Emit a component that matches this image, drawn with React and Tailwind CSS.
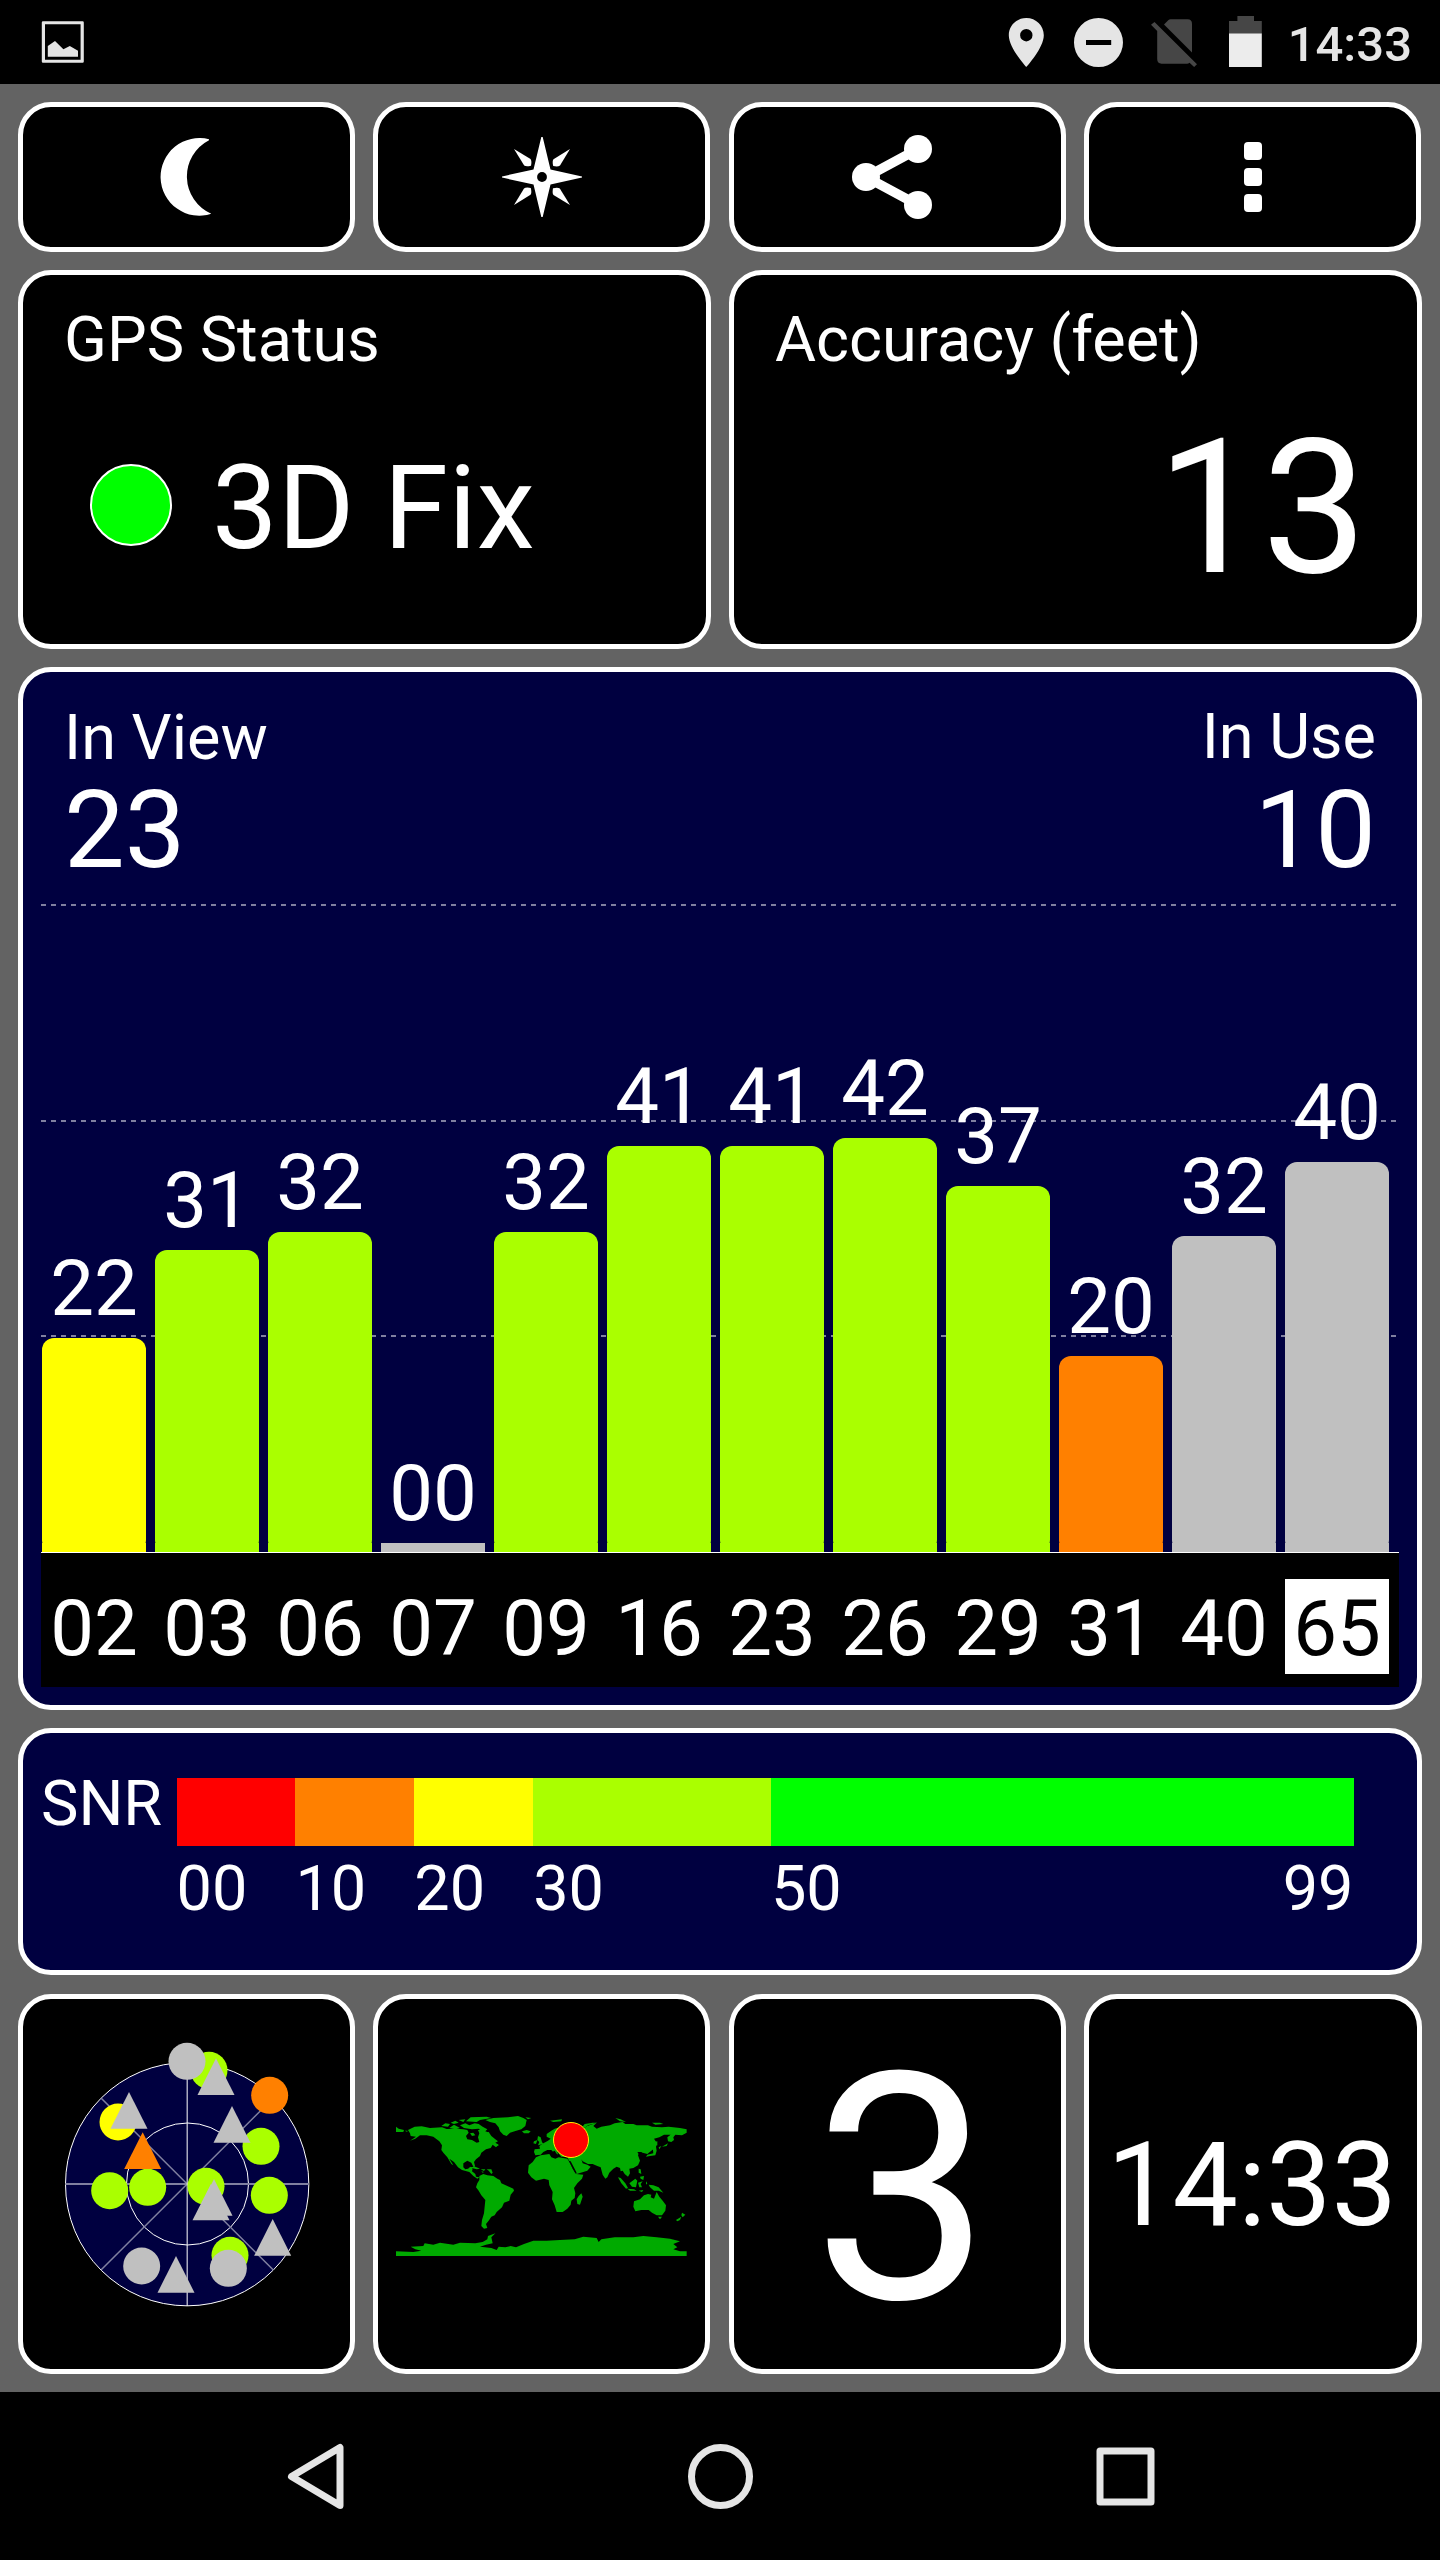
const SATELLITES = [
  { id: "02", snr: "22", height: 214, color: "bg-[#ffff00]" },
  { id: "03", snr: "31", height: 302, color: "bg-[#aaff00]" },
  { id: "06", snr: "32", height: 320, color: "bg-[#aaff00]" },
  { id: "07", snr: "00", height: 9, color: "bg-[#c0c0c0]" },
  { id: "09", snr: "32", height: 320, color: "bg-[#aaff00]" },
  { id: "16", snr: "41", height: 406, color: "bg-[#aaff00]" },
  { id: "23", snr: "41", height: 406, color: "bg-[#aaff00]" },
  { id: "26", snr: "42", height: 414, color: "bg-[#aaff00]" },
  { id: "29", snr: "37", height: 366, color: "bg-[#aaff00]" },
  { id: "31", snr: "20", height: 196, color: "bg-[#ff8000]" },
  { id: "40", snr: "32", height: 316, color: "bg-[#c0c0c0]" },
  { id: "65", snr: "40", height: 390, color: "bg-[#c0c0c0]", active: true },
];

const SNR_SCALE = [
  { label: "00", span: 10, color: "bg-[#ff0000]" },
  { label: "10", span: 10, color: "bg-[#ff8000]" },
  { label: "20", span: 10, color: "bg-[#ffff00]" },
  { label: "30", span: 20, color: "bg-[#aaff00]" },
  { label: "50", span: 49, color: "bg-[#00ff00]" },
];

const LIME = "#aaff00";
const GRAY = "#c0c0c0";
const ORANGE = "#ff8000";

// sky plot markers, in drawing order
const SKY = [
  { x: 292, y: 396, fill: "#ffff00" },
  { x: 565, y: 241, fill: LIME },
  { x: 721, y: 469, fill: LIME },
  { x: 267, y: 602, fill: LIME },
  { x: 381, y: 592, fill: LIME },
  { x: 556, y: 589, fill: LIME },
  { x: 746, y: 616, fill: LIME },
  { x: 628, y: 796, fill: LIME },
  { x: 747, y: 316, fill: ORANGE },
  { x: 499, y: 214, fill: GRAY },
  { x: 363, y: 828, fill: GRAY },
  { x: 623, y: 835, fill: GRAY },
  { x: 366, y: 482, fill: ORANGE, tri: true },
  { x: 325, y: 361, fill: GRAY, tri: true },
  { x: 586, y: 260, fill: GRAY, tri: true },
  { x: 634, y: 403, fill: GRAY, tri: true },
  { x: 580, y: 622, fill: GRAY, tri: true },
  { x: 571, y: 636, fill: GRAY, tri: true },
  { x: 756, y: 742, fill: GRAY, tri: true },
  { x: 466, y: 853, fill: GRAY, tri: true },
];

function Card({ className = "", children }) {
  return (
    <div className={`border-[5px] border-white rounded-[33px] overflow-hidden ${className}`}>
      {children}
    </div>
  );
}

function StatusBar() {
  return (
    <header className="h-[84px] bg-black text-[#e5e5e5] flex items-start justify-between pl-[41px] pr-[28px]">
      <svg width="44" height="84" viewBox="41 0 44 84" fill="#e5e5e5">
        <path fillRule="evenodd" d="M43 21.3h39.6a1.2 1.2 0 0 1 1.2 1.2v39a1.2 1.2 0 0 1-1.2 1.2H43a1.2 1.2 0 0 1-1.2-1.2v-39a1.2 1.2 0 0 1 1.2-1.2zM45 24.2v35.6h35.6V24.2z" />
        <path d="M47.8 46 55 41l8.4 8.3 6.4-3.3 8.2 4.7v6H47.8z" />
      </svg>
      <div className="flex items-start">
        <svg width="262" height="84" viewBox="1005 0 262 84" fill="#e5e5e5">
          <path
            fillRule="evenodd"
            d="M1026.3 18c-9.7 0-17.5 7.7-17.5 17.2 0 12.8 17.5 31.8 17.5 31.8s17.5-19 17.5-31.8c0-9.5-7.8-17.2-17.5-17.2zm0 23.4a6.2 6.2 0 1 1 0-12.4 6.2 6.2 0 0 1 0 12.4z"
          />
          <path
            fillRule="evenodd"
            d="M1098.5 18a24.5 24.5 0 1 0 0 49 24.5 24.5 0 0 0 0-49zM1086 40h25.2v5H1086z"
          />
          <g fill="#464646">
            <path d="M1164 24.5l4.5-4.5q.8-.7 2-.7h17q4.5 0 4.5 4.6v28.6z" />
            <path d="M1154.5 22 1197 64.2l-2.9 2.8-4.6-4.2q-1 .9-2.5.9h-25.4q-4.4 0-4.4-4.6V31l-6.2-6.3z" />
            <path d="M1237.4 16h16.6v5h7.8v13h-32.8V21h8.4z" />
          </g>
          <path fill="#ececec" d="M1229 33.5h32.8V67H1229z" />
        </svg>
        <span className="ml-[21px] mt-[20px] text-[49px] leading-none font-medium">14:33</span>
      </div>
    </header>
  );
}

function MoonIcon() {
  return (
    <svg width="60" height="84" viewBox="156 135 60 84" fill="#fff">
      <path d="M208 140.2A40.8 40.8 0 0 0 210.3 213.8 38.8 38.8 0 1 1 208 139.3z" />
    </svg>
  );
}

function CompassIcon() {
  return (
    <svg width="84" height="84" viewBox="-42 -42 84 84" fill="#fff">
      <path d="M-.7-40h1.4L8.5-7.5 40-.6V.6L8.5 7.5.7 40H-.7L-8.5 7.5-40 .6V-.6L-8.5-7.5z" />
      <circle r="4.9" fill="#000" />
      {[0, 90, 180, 270].map((angle) => (
        <path key={angle} transform={`rotate(${angle})`} d="M-28-28-11.5-18Q-10-16-11-11.2-16-10-17.8-11.5z" />
      ))}
    </svg>
  );
}

function ShareIcon() {
  return (
    <svg width="84" height="88" viewBox="850 133 84 88" fill="#fff">
      <path d="M918 149 866 177l52 28" fill="none" stroke="#fff" strokeWidth="9.5" />
      <circle cx="866" cy="177" r="14" />
      <circle cx="918" cy="149" r="14" />
      <circle cx="918" cy="205" r="14" />
    </svg>
  );
}

function MoreIcon() {
  return (
    <div className="flex flex-col gap-2">
      <span className="size-[18px] rounded-[4px] bg-white" />
      <span className="size-[18px] rounded-[4px] bg-white" />
      <span className="size-[18px] rounded-[4px] bg-white" />
    </div>
  );
}

function Toolbar() {
  return (
    <div className="grid grid-cols-[355px_356px_355px_337px] h-[150px]">
      <Card className="w-[337px] bg-black flex items-center justify-center">
        <MoonIcon />
      </Card>
      <Card className="w-[337px] bg-black flex items-center justify-center">
        <CompassIcon />
      </Card>
      <Card className="w-[337px] bg-black flex items-center justify-center pr-[11px]">
        <ShareIcon />
      </Card>
      <Card className="w-[337px] bg-black flex items-center justify-center">
        <MoreIcon />
      </Card>
    </div>
  );
}

function SatelliteChart() {
  return (
    <Card className="bg-[#000040] h-[1043px] px-[18px]">
      <div className="flex justify-between px-[23px] pt-[33px] h-[232px]">
        <div className="leading-none">
          <div className="text-[63px] pt-px">In View</div>
          <div className="text-[108px] mt-[7px]">23</div>
        </div>
        <div className="leading-none text-right">
          <div className="text-[63px]">In Use</div>
          <div className="text-[108px] mt-2">10</div>
        </div>
      </div>

      <div className="relative w-[1358px] h-[648px]">
        <svg className="absolute inset-0" width="1358" height="648" stroke="#8080a0" strokeWidth="2" strokeDasharray="5 5">
          <path d="M0 1H1356M0 217H1356M0 432H1356" />
        </svg>
        <div className="relative h-full flex items-end gap-[9px] pl-px">
          {SATELLITES.map((sat) => (
            <div key={sat.id} className="w-[104px] flex flex-col items-center">
              <span className="text-[78px] leading-none mb-[10px]">{sat.snr}</span>
              <div
                className={`w-full flex items-end ${sat.height > 12 ? "rounded-[12px]" : ""} ${sat.color}`}
                style={{ height: sat.height }}
              >
                <div className={`w-full h-[9px] ${sat.color}`} />
              </div>
            </div>
          ))}
        </div>
      </div>

      <div className="w-[1358px] h-[135px] bg-black border-t border-white flex gap-[9px] pl-px pt-[26px]">
        {SATELLITES.map((sat) => (
          <div
            key={sat.id}
            className={`w-[104px] h-[95px] pt-[11px] text-center text-[78px] leading-none ${sat.active ? "bg-white text-black" : ""}`}
          >
            {sat.id}
          </div>
        ))}
      </div>
    </Card>
  );
}

function SnrLegend() {
  return (
    <Card className="bg-[#000040] h-[247px] flex items-start text-[63px] leading-none pt-[45px] pl-[18px]">
      <div className="w-[135.5px] -mt-[6px]">SNR</div>
      <div className="w-[1177px]">
        <div className="flex h-[68px]">
          {SNR_SCALE.map((s) => (
            <div key={s.label} className={s.color} style={{ flexGrow: s.span, flexBasis: 0 }} />
          ))}
        </div>
        <div className="flex mt-[11px]">
          {SNR_SCALE.map((s) => (
            <div key={s.label} className="flex justify-between" style={{ flexGrow: s.span, flexBasis: 0 }}>
              <span>{s.label}</span>
              {s.label === "50" && <span>99</span>}
            </div>
          ))}
        </div>
      </div>
    </Card>
  );
}

function SkyPlot() {
  return (
    <svg width="280" height="300" viewBox="79 132 840 900">
      <circle cx="499.5" cy="582.5" r="365" fill="#000040" stroke="#fff" strokeWidth="3" />
      <circle cx="500.5" cy="582" r="183" fill="none" stroke="#fff" strokeWidth="3" />
      <path d="M134 582H865" stroke="#8080a0" strokeWidth="6" />
      <path d="M241 324 758 840M758 324 241 840" stroke="#8080a0" strokeWidth="4.5" />
      <path d="M499.5 217V948" stroke="#fff" strokeWidth="3" />
      {SKY.map((m, i) =>
        m.tri ? (
          <path key={i} d={`M${m.x} ${m.y - 55}l55.5 110h-111z`} fill={m.fill} />
        ) : (
          <circle key={i} cx={m.x} cy={m.y} r="55.5" fill={m.fill} />
        )
      )}
    </svg>
  );
}

function WorldMap() {
  return (
    <svg width="320" height="170" viewBox="0 0 960 510">
      <g fill="#00aa00">
        {/* north america */}
        <path d="M84 90 104 80 125 79 150 84 186 82 200 87 230 86 250 88 262 90 266 98 258 108 262 118 276 120 290 128 298 126 294 112 298 100 294 90 308 90 318 100 326 96 334 108 346 118 354 124 346 128 356 134 348 142 338 134 332 144 318 148 304 158 300 168 288 178 282 186 285 198 282 204 274 188 262 182 250 190 250 202 256 208 264 206 272 200 278 206 276 214 286 222 288 230 298 232 292 236 280 228 268 216 246 210 234 202 222 186 208 176 220 196 214 192 202 172 190 158 184 150 186 136 178 124 160 110 140 106 120 106 106 116 90 122 108 110 92 108 90 100z" />
        {/* arctic islands and greenland */}
        <path d="M184 78 196 70 210 72 204 80zM208 84 222 74 240 84 226 88zM212 68 226 62 236 68 222 72zM240 76 256 70 268 76 284 70 296 72 308 80 322 88 316 94 328 98 318 102 304 94 296 86 276 88 252 84zM236 60 256 58 250 66zM258 64 272 52 320 50 334 54 300 60 290 66zM270 100 280 98 286 106 276 108zM344 136 352 132 356 138z" />
        <path d="M316 60 340 54 384 52 414 48 430 54 440 60 436 78 424 88 404 94 390 98 380 108 370 104 360 94 356 82 346 70 330 66zM426 94 440 90 452 94 446 100 432 100zM436 52 454 54 444 58z" />
        {/* caribbean */}
        <path d="M266 202 286 200 300 206 290 208zM302 208 316 208 312 213zM320 208 334 208 338 218 334 222 326 212zM304 214 312 216 308 218z" />
        {/* south america */}
        <path d="M298 228 310 222 322 226 340 228 352 236 360 240 364 250 382 258 400 266 402 272 392 284 388 302 372 308 366 322 350 336 344 346 334 350 326 362 318 372 322 384 312 386 304 378 306 360 312 340 316 300 304 286 296 272 288 262 292 250 298 240z" />
        {/* africa */}
        <path d="M468 172 482 166 508 162 514 172 526 176 536 172 562 176 570 188 578 206 588 222 610 224 606 236 592 250 582 264 586 280 584 294 574 302 572 314 562 326 548 336 530 336 524 316 516 298 518 276 508 256 506 240 492 236 468 242 454 232 444 218 446 196 458 186zM604 280 608 290 600 314 592 312 590 298 596 288z" />
        {/* europe and asia */}
        <path d="M464 148 480 146 478 138 490 130 504 122 512 116 500 110 500 102 514 92 524 86 560 74 580 86 610 86 622 78 650 68 640 78 650 86 664 80 690 76 704 70 728 66 736 72 760 72 770 76 804 76 816 80 846 82 866 80 900 84 920 88 920 98 906 106 886 104 880 112 882 120 874 126 864 124 862 112 872 104 852 104 838 112 822 116 830 128 828 142 814 152 802 162 788 158 778 156 774 166 780 182 774 196 760 204 748 206 750 220 744 230 734 222 728 212 722 214 720 204 710 200 700 206 688 218 682 232 676 236 668 224 662 202 652 198 638 192 624 192 608 184 604 178 608 190 622 194 632 200 622 212 590 222 580 206 568 184 562 172 544 170 534 158 528 148 534 162 528 166 514 150 502 150 490 156 482 164 466 166 462 156z" />
        <path d="M474 108 482 112 486 126 490 132 474 136 478 126 472 120zM462 124 472 120 468 132 460 130zM510 62 546 58 544 64 520 66zM606 82 614 72 638 68 652 68 624 76 614 84zM706 54 722 58 738 66 720 64zM816 68 840 68 850 72 826 74zM48 80 56 86 72 90 70 96 48 96zM74 92 82 92 82 96z" />
        {/* japan, kamchatka */}
        <path d="M818 142 828 140 830 152 826 166 810 168 798 170 802 164 820 160zM822 126 832 124 832 136 824 138zM836 142 844 138 838 148zM846 140 864 130 860 138z" />
        {/* indonesia, philippines, new guinea */}
        <path d="M714 232 722 234 736 250 744 264 738 266 724 250zM742 266 762 268 770 272 750 272zM748 250 766 236 772 242 768 262 756 260zM774 248 788 244 782 252 786 262 778 262zM776 206 782 208 784 222 776 218zM780 230 792 228 790 240 782 236zM806 254 820 256 836 262 850 278 836 272 822 272 810 262zM776 272 790 270 786 276zM798 244 802 250 798 254z" />
        {/* australia, new zealand */}
        <path d="M762 304 780 298 792 286 804 282 814 284 812 292 822 296 830 276 838 290 848 302 858 316 856 332 846 346 830 346 816 338 806 330 784 330 766 334 760 320zM834 350 846 350 840 358zM906 338 916 344 908 352 904 346zM888 360 904 350 900 360 892 364z" />
        {/* antarctica */}
        <path d="M48 454 100 456 124 452 106 448 92 440 130 438 134 430 160 434 180 428 220 434 240 428 286 430 308 426 322 418 324 408 346 400 334 412 338 430 318 434 300 440 334 444 350 450 356 440 376 442 392 438 408 442 432 432 460 422 500 422 540 420 584 418 610 410 650 414 656 426 664 418 704 412 760 412 790 408 830 412 870 416 900 424 880 432 892 442 880 448 900 454 920 454 920 468 48 468z" />
      </g>
      <g fill="#000">
        <path d="M566 182 572 184 590 218 586 220zM772 156 780 168 790 164 784 156zM516 156 524 152 532 164 536 172 522 166z" />
      </g>
      <circle cx="573" cy="120" r="52.5" fill="#f00" stroke="#ffee00" strokeWidth="3" />
    </svg>
  );
}

function NavBar() {
  return (
    <nav className="h-[168px] bg-black flex items-center gap-[333px] pl-[279px]">
      <svg width="72" height="72" fill="none" stroke="#e5e5e5" strokeWidth="7" strokeLinejoin="round">
        <path d="M61 7.5v58L12.5 36.5z" />
      </svg>
      <svg width="72" height="72" fill="none" stroke="#e5e5e5" strokeWidth="7">
        <circle cx="36.5" cy="36.5" r="29" />
      </svg>
      <svg width="72" height="72" fill="none" stroke="#e5e5e5" strokeWidth="7" strokeLinejoin="round">
        <path d="M11 11h51v51h-51z" />
      </svg>
    </nav>
  );
}

export default function App() {
  return (
    <div className="w-[1440px] h-[2560px] bg-[#636363] text-white font-['Roboto',sans-serif] overflow-hidden">
      <StatusBar />

      <main className="h-[2308px] p-[18px] flex flex-col gap-[18px]">
        <Toolbar />

        <div className="grid grid-cols-2 gap-[18px] h-[379px]">
          <Card className="bg-black pl-[41px] pt-[33px] leading-none">
            <div className="text-[63px]">GPS Status</div>
            <div className="flex items-center mt-[79px] pl-[26px]">
              <div className="size-[82px] rounded-full bg-[#00ff00] border-2 border-white -mt-[7px]" />
              <div className="text-[117px] ml-[40px]">3D Fix</div>
            </div>
          </Card>
          <Card className="bg-black pl-[41px] pr-[50px] pt-[33px] leading-none">
            <div className="text-[63px]">Accuracy (feet)</div>
            <div className="text-[187px] text-right mt-[44px]">13</div>
          </Card>
        </div>

        <SatelliteChart />
        <SnrLegend />

        <div className="grid grid-cols-[355px_356px_355px_338px] h-[380px] mt-px">
          <Card className="w-[337px] bg-black flex items-center justify-center">
            <SkyPlot />
          </Card>
          <Card className="w-[337px] bg-black flex items-center justify-center pr-[3px] pt-[2px]">
            <WorldMap />
          </Card>
          <Card className="w-[337px] bg-black flex items-center justify-center pl-[9px] pt-[10px] text-[317px] leading-none">
            3
          </Card>
          <Card className="bg-black flex items-center justify-center pt-[3px] pr-[2px] text-[116.5px] leading-none">
            14:33
          </Card>
        </div>
      </main>

      <NavBar />
    </div>
  );
}
